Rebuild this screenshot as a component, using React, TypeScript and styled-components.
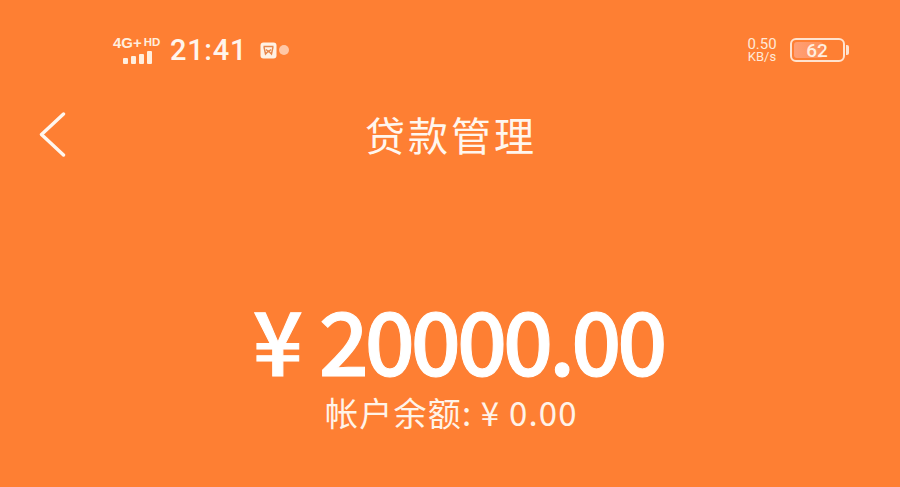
import React from "react";
import styled, { createGlobalStyle } from "styled-components";

const GlobalStyle = createGlobalStyle`
  html, body {
    margin: 0;
    padding: 0;
    background: #fe7f33;
  }
`;

const Page = styled.div`
  width: 900px;
  height: 487px;
  overflow: hidden;
  background: #fe7f33;
  color: #fff;
  font-family: "Noto Sans CJK SC", "Noto Sans", sans-serif;
  display: flex;
  flex-direction: column;
`;

const StatusBar = styled.div`
  height: 36px;
  margin-top: 32px;
  padding: 0 55px 0 113px;
  display: flex;
  align-items: center;
  justify-content: space-between;
`;

const StatusGroup = styled.div`
  display: flex;
  align-items: center;
`;

const Network = styled.div`
  width: 50px;
  display: flex;
  flex-direction: column;
  color: #ffeede;
`;

const NetworkLabel = styled.div`
  font-family: "Liberation Sans", sans-serif;
  font-weight: 700;
  font-size: 15px;
  line-height: 12px;
  white-space: nowrap;
`;

const HdMark = styled.span`
  font-size: 11.5px;
  margin-left: 2px;
  vertical-align: 2px;
`;

const SignalBars = styled.svg`
  display: block;
  margin-top: 1px;
`;

const Clock = styled.div`
  font-family: "Roboto", sans-serif;
  font-weight: 500;
  font-size: 29px;
  line-height: 36px;
  letter-spacing: 0.7px;
  margin-left: 7px;
  color: #fff5ec;
`;

const AppIcon = styled.svg`
  margin-left: 13px;
  display: block;
`;

const Dot = styled.div`
  width: 10px;
  height: 10px;
  margin-left: 2px;
  border-radius: 50%;
  background: #ffc7a6;
`;

const Speed = styled.div`
  width: 32px;
  text-align: center;
  font-family: "Roboto", sans-serif;
  font-size: 15px;
  line-height: 14px;
  color: #ffe9d8;
  margin-right: 12px;
`;

const SpeedUnit = styled.div`
  font-size: 13px;
  line-height: 12px;
`;

const Battery = styled.div`
  position: relative;
  width: 55px;
  height: 24px;
  box-sizing: border-box;
  border: 2px solid #ffe3cf;
  border-radius: 6px;
  padding: 2px;
  &::after {
    content: "";
    position: absolute;
    right: -6px;
    top: 5px;
    width: 3px;
    height: 10px;
    border-radius: 0 2px 2px 0;
    background: #ffe3cf;
  }
`;

const BatteryFill = styled.div`
  position: relative;
  height: 100%;
  border-radius: 3px;
  background: linear-gradient(90deg, #ffa077, #fe9158);
`;

const BatteryText = styled.div`
  position: absolute;
  left: 0;
  right: -17px;
  top: 0;
  bottom: 0;
  display: flex;
  align-items: center;
  justify-content: center;
  font-family: "Roboto", sans-serif;
  font-weight: 500;
  font-size: 19px;
  color: #ffeede;
`;

const NavBar = styled.div`
  height: 60px;
  margin-top: 36px;
  padding-left: 39px;
  position: relative;
  display: flex;
  align-items: center;
`;

const BackIcon = styled.svg`
  display: block;
  margin-top: 2px;
`;

const Title = styled.div`
  position: absolute;
  left: 0;
  right: 0;
  text-align: center;
  font-size: 40px;
  line-height: 60px;
  font-weight: 400;
  letter-spacing: 3px;
  padding-left: 2px;
  color: #fff6ee;
`;

const Summary = styled.div`
  flex: 1;
  display: flex;
  flex-direction: column;
  align-items: center;
  padding-top: 134px;
`;

const Amount = styled.div`
  font-family: "Noto Sans CJK SC", "Noto Sans", sans-serif;
  font-weight: 500;
  font-size: 88px;
  line-height: 80px;
  letter-spacing: -4.1px;
  padding-left: 16px;
  white-space: nowrap;
  color: #fff;
  -webkit-text-stroke: 1px #fff;
`;

const Currency = styled.span`
  margin-right: 20px;
`;

const Balance = styled.div`
  margin-top: 11px;
  padding-left: 3px;
  font-size: 33px;
  line-height: 46px;
  font-weight: 400;
  letter-spacing: 1.2px;
  white-space: nowrap;
  color: #fff3e8;
`;

export default function App() {
  return (
    <Page>
      <GlobalStyle />
      <StatusBar>
        <StatusGroup>
          <Network>
            <NetworkLabel>
              4G+<HdMark>HD</HdMark>
            </NetworkLabel>
            <SignalBars width="42" height="14" viewBox="0 0 42 14">
              <g fill="#ffeede">
                <rect x="10" y="8" width="5" height="6" rx="1" />
                <rect x="18" y="6" width="5" height="8" rx="1" />
                <rect x="26" y="4" width="5" height="10" rx="1" />
                <rect x="34" y="1" width="5" height="13" rx="1" />
              </g>
            </SignalBars>
          </Network>
          <Clock>21:41</Clock>
          <AppIcon width="17" height="17" viewBox="0 0 17 17">
            <rect width="16" height="16" x="0.5" y="0.5" rx="3" fill="#fff1e4" />
            <path
              d="M3.5 4.5h10M4 5l1.5 7 3-3 3 3L13 5M6 7.5l2.5 2 2.5-2"
              fill="none"
              stroke="#e8864a"
              strokeWidth="1.4"
            />
          </AppIcon>
          <Dot />
        </StatusGroup>
        <StatusGroup>
          <Speed>
            0.50
            <SpeedUnit>KB/s</SpeedUnit>
          </Speed>
          <Battery>
            <BatteryFill style={{ width: "62%" }}>
              <BatteryText>62</BatteryText>
            </BatteryFill>
          </Battery>
        </StatusGroup>
      </StatusBar>
      <NavBar>
        <Title>贷款管理</Title>
        <BackIcon width="27" height="46" viewBox="0 0 27 46">
          <path
            d="M24.5 2 L2.5 22.5 L24.5 43"
            fill="none"
            stroke="#fff6ee"
            strokeWidth="3.4"
            strokeLinecap="round"
            strokeLinejoin="round"
          />
        </BackIcon>
      </NavBar>
      <Summary>
        <Amount>
          <Currency>¥</Currency>20000.00
        </Amount>
        <Balance>帐户余额: ¥ 0.00</Balance>
      </Summary>
    </Page>
  );
}
